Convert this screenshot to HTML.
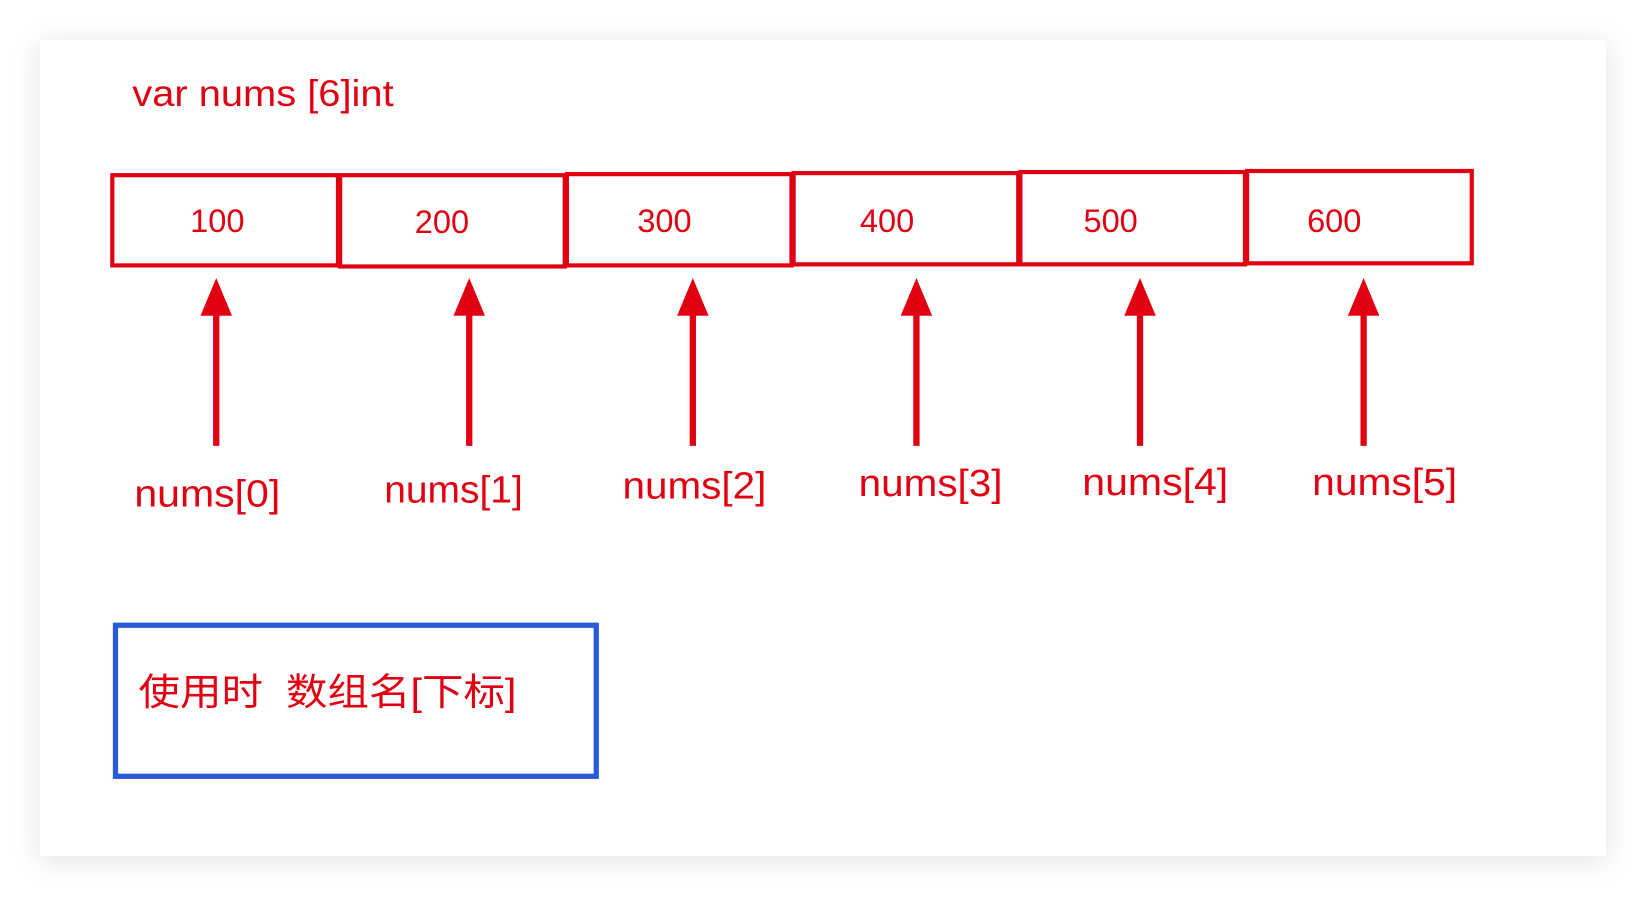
<!DOCTYPE html>
<html><head><meta charset="utf-8"><style>html,body{margin:0;padding:0;background:#fff;width:1646px;height:898px;overflow:hidden}</style></head>
<body>
<svg width="1646" height="898" viewBox="0 0 1568 856" preserveAspectRatio="none" xmlns="http://www.w3.org/2000/svg" style="display:block">
<defs><filter id="s" x="-10%" y="-10%" width="120%" height="120%"><feGaussianBlur stdDeviation="14"/></filter></defs>
<rect x="38" y="42" width="1492" height="778" fill="#000" opacity="0.12" filter="url(#s)"/>
<rect x="38" y="38" width="1492" height="778" fill="#fff"/>
<g font-family="Liberation Sans, Noto Sans CJK SC, sans-serif" fill="#e00012">
<text x="126" y="101" font-size="35" textLength="249" lengthAdjust="spacingAndGlyphs">var nums [6]int</text>
<g fill="none" stroke="#e00012" stroke-width="4">
<rect x="107" y="167" width="215" height="86"/>
<rect x="324" y="167" width="214" height="87"/>
<rect x="540" y="166" width="214" height="87"/>
<rect x="756" y="165" width="214" height="87"/>
<rect x="972" y="164" width="214" height="88"/>
<rect x="1188" y="163" width="214" height="88"/>
</g>
<g font-size="31" text-anchor="middle">
<text x="207" y="221">100</text><text x="421" y="222">200</text><text x="633" y="221">300</text>
<text x="845" y="221">400</text><text x="1058" y="221">500</text><text x="1271" y="221">600</text>
</g>
<g>
<rect x="203" y="300" width="6" height="125"/><polygon points="206,265 191,301 221,301"/>
<rect x="444" y="300" width="6" height="125"/><polygon points="447,265 432,301 462,301"/>
<rect x="657" y="300" width="6" height="125"/><polygon points="660,265 645,301 675,301"/>
<rect x="870" y="300" width="6" height="125"/><polygon points="873,265 858,301 888,301"/>
<rect x="1083" y="300" width="6" height="125"/><polygon points="1086,265 1071,301 1101,301"/>
<rect x="1296" y="300" width="6" height="125"/><polygon points="1299,265 1284,301 1314,301"/>
</g>
<g font-size="36" lengthAdjust="spacingAndGlyphs">
<text x="128" y="483" textLength="139" lengthAdjust="spacingAndGlyphs">nums[0]</text>
<text x="366" y="479" textLength="132" lengthAdjust="spacingAndGlyphs">nums[1]</text>
<text x="593" y="475" textLength="137" lengthAdjust="spacingAndGlyphs">nums[2]</text>
<text x="818" y="473" textLength="137" lengthAdjust="spacingAndGlyphs">nums[3]</text>
<text x="1031" y="472" textLength="139" lengthAdjust="spacingAndGlyphs">nums[4]</text>
<text x="1250" y="472" textLength="138" lengthAdjust="spacingAndGlyphs">nums[5]</text>
</g>
<rect x="110" y="596" width="458" height="144" fill="none" stroke="#2a5bd7" stroke-width="5"/>
<text x="132" y="672" font-size="36" textLength="360" lengthAdjust="spacingAndGlyphs">使用时&#160;&#160;数组名[下标]</text>
</g>
</svg>
</body></html>
